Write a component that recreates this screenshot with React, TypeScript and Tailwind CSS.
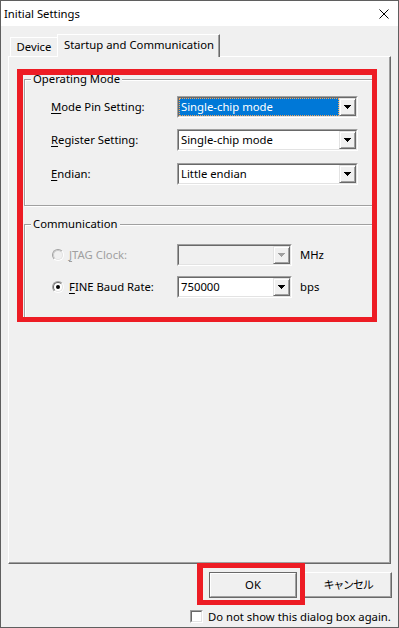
import type { ReactNode } from 'react'

type ComboProps = {
  value?:    string
  width:     string
  selected?: boolean
  disabled?: boolean
}

function Arrow({ disabled }: { disabled?: boolean }) {
  return (
    <svg width="7" height="4" viewBox="0 0 7 4" shapeRendering="crispEdges">
      <path d="M0 0h7v1H0z M1 1h5v1H1z M2 2h3v1H2z M3 3h1v1H3z" fill={disabled ? '#a0a0a0' : '#000'} />
    </svg>
  )
}

function Combo({ value, width, selected, disabled }: ComboProps) {
  return (
    <div className={`${width} h-[22px] flex border border-t-[#a0a0a0] border-l-[#a0a0a0] border-r-white border-b-white`}>
      <div className={`flex-1 flex border border-t-[#696969] border-l-[#696969] border-r-[#e3e3e3] border-b-[#e3e3e3] ${disabled ? 'bg-[#f0f0f0]' : 'bg-white'}`}>
        {selected ? (
          <div className="flex-1 flex items-center bg-[#0078d7] text-white pl-[1px] border border-dotted border-[#f3a55a]">
            {value}
          </div>
        ) : (
          <div className="flex-1 flex items-center pl-[2px]">{value}</div>
        )}
        <div className="w-[17px] flex items-center justify-center bg-[#f0f0f0] border border-t-[#e3e3e3] border-l-[#e3e3e3] border-r-[#696969] border-b-[#696969] shadow-[inset_1px_1px_0_#fff,inset_-1px_-1px_0_#a0a0a0]">
          <Arrow disabled={disabled} />
        </div>
      </div>
    </div>
  )
}

function Key({ children }: { children: ReactNode }) {
  return <span className="underline underline-offset-[2px] decoration-1">{children}</span>
}

function Radio({ checked, disabled }: { checked?: boolean; disabled?: boolean }) {
  return (
    <div className="w-[12px] h-[12px] rounded-full flex border border-t-[#a0a0a0] border-l-[#a0a0a0] border-r-white border-b-white">
      <div className={`flex-1 rounded-full flex items-center justify-center border ${disabled ? 'bg-[#f0f0f0] border-t-[#c8c8c8] border-l-[#c8c8c8] border-r-[#e3e3e3] border-b-[#e3e3e3]' : 'bg-white border-t-[#696969] border-l-[#696969] border-r-[#e3e3e3] border-b-[#e3e3e3]'}`}>
        {checked && <div className="w-[4px] h-[4px] rounded-full bg-black" />}
      </div>
    </div>
  )
}

function Group({ title, children, className }: { title: string; children: ReactNode; className: string }) {
  return (
    <fieldset className={`ml-[15px] w-[352px] border border-[#a0a0a0] shadow-[inset_1px_1px_0_#fff,1px_1px_0_#fff] ${className}`}>
      <legend className="ml-[6px] px-[2px] leading-[16px] bg-[#f0f0f0]">{title}</legend>
      {children}
    </fieldset>
  )
}

export default function App() {
  return (
    <div className="relative w-[399px] h-[628px] flex flex-col bg-[#f0f0f0] border border-[#5f5f5f] text-[11.3px] leading-[16px] text-black font-['Noto_Sans','Noto_Sans_CJK_JP',sans-serif]">

      {/* title bar */}
      <div className="h-[25px] flex items-center justify-between bg-white pl-[3px] pr-[9px]">
        <span>Initial Settings</span>
        <svg width="10" height="10" viewBox="0 0 10 10">
          <path d="M0.5 0.5L9.5 9.5M9.5 0.5L0.5 9.5" stroke="#000" strokeWidth="1" />
        </svg>
      </div>

      {/* tabs */}
      <div className="mt-[8px] ml-[7px] w-[383px]">
        <div className="flex items-end h-[22px] pl-[2px]">
          <div className="w-[47px] h-[19px] flex items-center justify-center border-t border-l border-white">
            Device
          </div>
          <div className="relative z-10 w-[163px] h-[23px] -mb-[1px] flex items-center pl-[6px] pb-[2px] whitespace-nowrap bg-[#f0f0f0] border-t border-l border-r border-t-white border-l-white border-r-[#696969] shadow-[inset_-1px_0_0_#a0a0a0]">
            Startup and Communication
          </div>
        </div>

        <div className="relative h-[508px] border border-t-white border-l-white border-r-[#696969] border-b-[#696969] shadow-[inset_-1px_-1px_0_#a0a0a0]">

          <Group title="Operating Mode" className="mt-[14px] pt-[9px] pb-[20px]">
            <div className="h-[22px] flex items-center pl-[26px]">
              <span className="w-[126px]"><Key>M</Key>ode Pin Setting:</span>
              <Combo width="w-[181px]" value="Single-chip mode" selected />
            </div>
            <div className="mt-[11px] h-[22px] flex items-center pl-[26px]">
              <span className="w-[126px]"><Key>R</Key>egister Setting:</span>
              <Combo width="w-[181px]" value="Single-chip mode" />
            </div>
            <div className="mt-[12px] h-[22px] flex items-center pl-[26px]">
              <span className="w-[126px]"><Key>E</Key>ndian:</span>
              <Combo width="w-[181px]" value="Little endian" />
            </div>
          </Group>

          <Group title="Communication" className="mt-[10px] pt-[12px] pb-[19px]">
            <div className="h-[22px] flex items-center pl-[27px]">
              <Radio disabled />
              <span className="ml-[5px] w-[108px] text-[#a0a0a0]"><Key>J</Key>TAG Clock:</span>
              <Combo width="w-[115px]" disabled />
              <span className="ml-[8px]">MHz</span>
            </div>
            <div className="mt-[10px] h-[22px] flex items-center pl-[27px]">
              <Radio checked />
              <span className="ml-[5px] w-[108px]"><Key>F</Key>INE Baud Rate:</span>
              <Combo width="w-[115px]" value="750000" />
              <span className="ml-[8px]">bps</span>
            </div>
          </Group>

          {/* red highlight */}
          <div className="absolute left-[8px] top-[12px] w-[360px] h-[253px] border-[5px] border-l-[6px] border-t-[6px] border-[#ed1c24]" />
        </div>
      </div>

      {/* buttons */}
      <div className="mt-[8px] flex justify-end gap-[7px] pr-[6px]">
        <div className="w-[88px] h-[26px] flex border border-[#696969]">
          <div className="flex-1 flex items-center justify-center bg-[#f0f0f0] border border-t-white border-l-white border-r-[#a0a0a0] border-b-[#a0a0a0]">
            OK
          </div>
        </div>
        <div className="w-[88px] h-[26px] flex items-center justify-center bg-[#f0f0f0] border border-t-white border-l-white border-r-[#696969] border-b-[#696969] shadow-[inset_-1px_-1px_0_#a0a0a0] text-[11px] tracking-[-1.2px]">
          キャンセル
        </div>
      </div>

      {/* checkbox */}
      <div className="mt-[12px] h-[13px] flex items-center pl-[189px]">
        <div className="w-[13px] h-[13px] flex border border-t-[#a0a0a0] border-l-[#a0a0a0] border-r-white border-b-white">
          <div className="flex-1 bg-white border border-t-[#696969] border-l-[#696969] border-r-[#e3e3e3] border-b-[#e3e3e3]" />
        </div>
        <span className="ml-[5px] whitespace-nowrap">Do not show this dialog box again.</span>
      </div>

      {/* red highlight around OK */}
      <div className="absolute left-[196px] top-[562px] w-[108px] h-[42px] border-[5px] border-l-[6px] border-[#ed1c24]" />
    </div>
  )
}
